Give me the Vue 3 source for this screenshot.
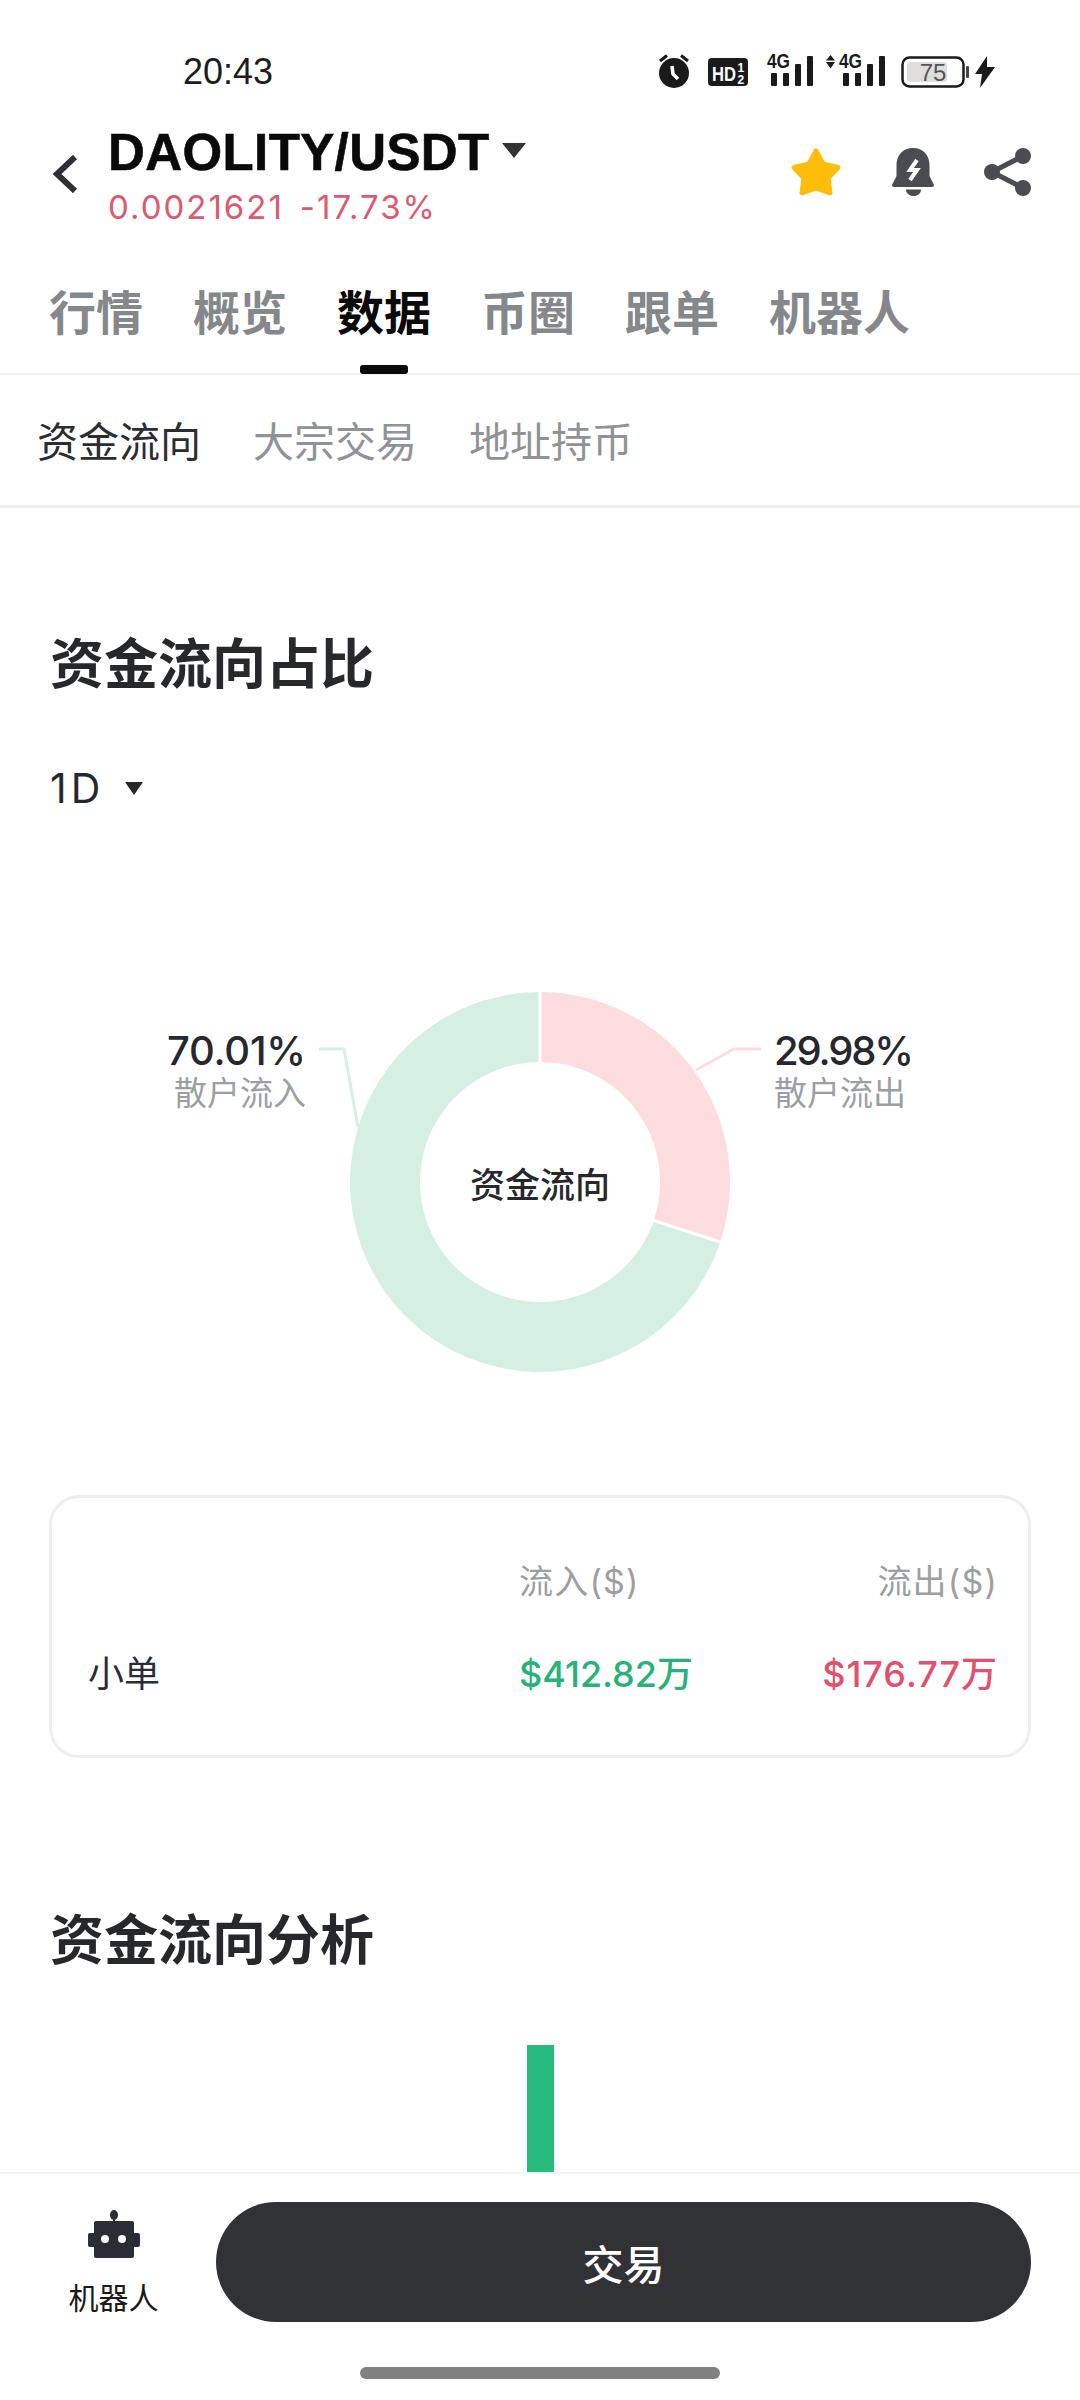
<template>
  <div class="page">
    <div class="content">
      <div class="status">
        <span class="time">20:43</span>
        <div class="status-icons">
          <svg width="32" height="34" viewBox="0 0 32 34" class="ic-alarm">
            <circle cx="16" cy="19" r="15" fill="#1a1a1a" />
            <path d="M2 7 9 1.500M30 7 23 1.500" stroke="#1a1a1a" stroke-width="3" fill="none" />
            <path d="M14 12l1 8 5 5" stroke="#fff" stroke-width="3.500" fill="none" />
          </svg>
          <svg width="40" height="28" viewBox="0 0 40 28" class="ic-hd">
            <rect width="40" height="28" rx="4" fill="#1a1a1a" />
            <text x="4" y="23" class="hd-text" textLength="24" lengthAdjust="spacingAndGlyphs">HD</text>
            <text x="29.500" y="14" class="hd-small">1</text>
            <text x="29.500" y="26" class="hd-small">2</text>
          </svg>
          <svg width="46" height="41" viewBox="0 -8 46 41" class="ic-sig">
            <text x="0" y="14" class="net" textLength="23" lengthAdjust="spacingAndGlyphs">4G</text>
            <rect x="4" y="19" width="6" height="13" rx="1" fill="#1a1a1a" />
            <rect x="16" y="19" width="6" height="13" rx="1" fill="#1a1a1a" />
            <rect x="28" y="10" width="6" height="22" rx="1" fill="#1a1a1a" />
            <rect x="40" y="2" width="6" height="30" rx="1" fill="#1a1a1a" />
          </svg>
          <svg width="59" height="41" viewBox="0 -8 59 41" class="ic-sig2">
            <path d="M4.500 1l4.500 5.500H0zM4.500 14.500 9 8H0z" fill="#1a1a1a" />
            <text x="13" y="14" class="net" textLength="23" lengthAdjust="spacingAndGlyphs">4G</text>
            <rect x="17" y="19" width="6" height="13" rx="1" fill="#1a1a1a" />
            <rect x="29" y="19" width="6" height="13" rx="1" fill="#1a1a1a" />
            <rect x="41" y="10" width="6" height="22" rx="1" fill="#1a1a1a" />
            <rect x="53" y="2" width="6" height="30" rx="1" fill="#1a1a1a" />
          </svg>
          <svg width="68" height="32" viewBox="0 0 68 32" class="ic-bat">
            <rect x="1.500" y="1.500" width="61" height="29" rx="7" fill="#fff" stroke="#1a1a1a" stroke-width="2.500" />
            <rect x="6" y="6" width="40" height="20" rx="3" fill="#dedede" />
            <rect x="65" y="10" width="3" height="12" rx="1" fill="#444" />
            <text x="32" y="25" text-anchor="middle" class="bat">75</text>
          </svg>
          <svg width="20" height="32" viewBox="0 0 20 32" class="ic-bolt">
            <path d="M12 0 0 18h7l-2 14L20 11h-8z" fill="#1a1a1a" />
          </svg>
        </div>
      </div>

      <div class="header">
        <svg class="back" width="26" height="38" viewBox="0 0 26 38">
          <path d="M23 2 5 19l18 17" fill="none" stroke="#2e3035" stroke-width="6" />
        </svg>
        <div class="pair">
          <div class="pair-row">
            <span class="pair-name">DAOLITY/USDT</span>
            <span class="pair-arrow"></span>
          </div>
          <div class="pair-price">
            <span>0.0021621</span>
            <span>-17.73%</span>
          </div>
        </div>
        <div class="actions">
          <svg width="52" height="48" viewBox="0 0 52 48">
            <path d="M26 3 33 16 48 19.500 38 30 40 45 26 40 12 45 14 30 4 19.500 19 16Z" fill="#fdbd09" stroke="#fdbd09" stroke-width="5" stroke-linejoin="round" />
          </svg>
          <svg width="42" height="48" viewBox="0 0 42 48">
            <path d="M21 0C11 0 4.500 7 4.500 17V28L0 37Q0 39 2 39H40Q42 39 42 37L37.500 28V17C37.500 7 31 0 21 0Z" fill="#4a4c52" />
            <path d="M14 41.500H29C29 45.500 25.500 48 21.500 48S14 45.500 14 41.500Z" fill="#4a4c52" />
            <path d="M25 12 18 22H25L18 32" fill="none" stroke="#fff" stroke-width="4" />
          </svg>
          <svg width="47" height="48" viewBox="0 0 47 48">
            <path d="M39 8 8 24l31 16" fill="none" stroke="#4a4c52" stroke-width="5" />
            <circle cx="39" cy="8" r="8" fill="#4a4c52" />
            <circle cx="8" cy="24" r="8" fill="#4a4c52" />
            <circle cx="39" cy="40" r="8" fill="#4a4c52" />
          </svg>
        </div>
      </div>

      <div class="tabs">
        <div v-for="t in tabs" :key="t" class="tab" :class="{ 'tab--on': t === '数据' }">{{ t }}</div>
      </div>

      <div class="subtabs">
        <span v-for="(s, i) in subTabs" :key="s" class="subtab" :class="{ 'subtab--on': i === 0 }">{{ s }}</span>
      </div>

      <h2 class="title">资金流向占比</h2>
      <div class="range">
        <span class="range-text">1D</span>
        <span class="range-arrow"></span>
      </div>

      <svg class="chart" width="1080" height="677" viewBox="0 0 1080 677">
        <path d="M541.500 174 A190 190 0 0 1 720.800 422.400 L654.200 400.900 A120 120 0 0 0 541.500 244 Z" fill="#fcdcdf" />
        <path d="M538.500 174 A190 190 0 1 0 719.800 425.400 L653.200 403.900 A120 120 0 1 1 538.500 244 Z" fill="#d5f0e3" />
        <path d="M761 231H734L696 252" fill="none" stroke="#fcdcdf" stroke-width="3" />
        <path d="M319 231H344L358 309" fill="none" stroke="#d5f0e3" stroke-width="3" />
        <text x="167" y="247" class="pct" textLength="139">70.01%</text>
        <text x="306" y="287" text-anchor="end" class="lab">散户流入</text>
        <text x="774" y="247" class="pct" textLength="140">29.98%</text>
        <text x="774" y="287" class="lab">散户流出</text>
        <text x="540" y="380" text-anchor="middle" class="mid">资金流向</text>
      </svg>

      <div class="card">
        <div class="card-row card-head">
          <span></span>
          <span>流入($)</span>
          <span class="right">流出($)</span>
        </div>
        <div class="card-row card-body">
          <span class="name">小单</span>
          <span class="up">$412.82万</span>
          <span class="down right">$176.77万</span>
        </div>
      </div>

      <h2 class="title title--second">资金流向分析</h2>
      <div class="bars"><div class="bar"></div></div>
    </div>

    <div class="footer">
      <div class="footer-row">
        <div class="robot">
          <svg width="52" height="48" viewBox="0 0 52 48">
            <rect x="25" y="6" width="2" height="8" fill="#2a2c36" />
            <ellipse cx="26" cy="5" rx="4" ry="5" fill="#2a2c36" />
            <rect x="6" y="11" width="40" height="37" rx="2" fill="#2a2c36" />
            <rect x="0" y="23" width="52" height="14" rx="2" fill="#2a2c36" />
            <ellipse cx="17" cy="29" rx="4" ry="4" fill="#fff" />
            <ellipse cx="34" cy="29" rx="4" ry="4" fill="#fff" />
          </svg>
          <span>机器人</span>
        </div>
        <button class="trade">交易</button>
      </div>
      <div class="home"></div>
    </div>
  </div>
</template>

<script setup>
const tabs = ["行情", "概览", "数据", "币圈", "跟单", "机器人"];
const subTabs = ["资金流向", "大宗交易", "地址持币"];
</script>

<style>
body {
  background: #fff;
}
</style>

<style scoped>
.page {
  width: 1080px;
  height: 2400px;
  display: flex;
  flex-direction: column;
  overflow: hidden;
  background: #fff;
  font-family: "Inter", "Noto Sans CJK SC", sans-serif;
  color: #26282c;
}

.content {
  height: 2172px;
  overflow: hidden;
}

.status {
  height: 120px;
  display: flex;
  align-items: flex-start;
  justify-content: space-between;
  padding: 0 85px 0 183px;
}

.time {
  margin-top: 51px;
  font-size: 36px;
  line-height: 42px;
  font-family: "Liberation Sans", sans-serif;
  color: #1d1d1d;
}

.status-icons {
  display: flex;
  align-items: flex-start;
  padding-top: 54px;
}

.ic-hd {
  margin: 4px 0 0 18px;
}

.ic-sig {
  margin: -8px 0 0 19px;
}

.ic-sig2 {
  margin: -8px 0 0 13px;
}

.ic-bat {
  margin: 2px 0 0 16px;
}

.ic-bolt {
  margin: 2px 0 0 6px;
}

.net {
  font-size: 20px;
  font-weight: 700;
  font-family: "Liberation Sans", sans-serif;
  fill: #1a1a1a;
}

.hd-text {
  font-size: 20px;
  font-weight: 700;
  font-family: "Liberation Sans", sans-serif;
  fill: #fff;
}

.hd-small {
  font-size: 12px;
  font-weight: 700;
  font-family: "Liberation Sans", sans-serif;
  fill: #fff;
}

.bat {
  font-size: 24px;
  font-family: "Liberation Sans", sans-serif;
  fill: #555;
}

.header {
  height: 108px;
  box-sizing: border-box;
  display: flex;
  align-items: flex-start;
  padding: 4px 49px 0 52px;
}

.back {
  margin-top: 31px;
}

.pair {
  margin-left: 30px;
}

.pair-row {
  display: flex;
  align-items: center;
  height: 56px;
}

.pair-name {
  font-family: "Liberation Sans", sans-serif;
  font-size: 51px;
  font-weight: 700;
  color: #0a0a0a;
  letter-spacing: 0.4px;
  -webkit-text-stroke: 0.6px #0a0a0a;
}

.pair-arrow {
  width: 0;
  height: 0;
  margin: 0 0 4px 12px;
  border-left: 12px solid transparent;
  border-right: 12px solid transparent;
  border-top: 15px solid #333;
}

.pair-price {
  display: flex;
  gap: 16px;
  margin-top: 8px;
  font-size: 33px;
  line-height: 38px;
  letter-spacing: 2px;
  color: #dc5a6e;
}

.actions {
  margin-left: auto;
  display: flex;
  gap: 50px;
  padding-top: 24px;
}

.tabs {
  height: 147px;
  display: flex;
  gap: 50px;
  padding: 50px 0 0 49px;
  border-bottom: 2px solid #f2f2f2;
  box-sizing: border-box;
}

.tab {
  position: relative;
  height: 70px;
  font-size: 47px;
  line-height: 70px;
  font-weight: 700;
  color: #85888b;
}

.tab--on {
  color: #0a0a0a;
}

.tab--on::after {
  content: "";
  position: absolute;
  left: 23px;
  top: 87px;
  width: 48px;
  height: 9px;
  border-radius: 3px;
  background: #0a0a0a;
}

.subtabs {
  height: 133px;
  display: flex;
  align-items: center;
  gap: 52px;
  padding: 0 37px 3px;
  border-bottom: 3px solid #f0f0f0;
  box-sizing: border-box;
}

.subtab {
  font-size: 41px;
  color: #8f9396;
}

.subtab--on {
  color: #2b2d31;
}

.title {
  height: 80px;
  margin: 117px 0 0 50px;
  font-size: 54px;
  line-height: 80px;
  font-weight: 700;
  color: #26282c;
}

.title--second {
  margin-top: 143px;
}

.range {
  height: 60px;
  margin: 53px 0 0 50px;
  display: flex;
  align-items: center;
  font-size: 41px;
  color: #26282c;
}

.range-text {
  width: 75px;
  letter-spacing: 4px;
}

.range-arrow {
  width: 0;
  height: 0;
  border-left: 9px solid transparent;
  border-right: 9px solid transparent;
  border-top: 13px solid #26282c;
}

.chart {
  display: block;
}

.pct {
  font-size: 40px;
  font-weight: 500;
  fill: #26282c;
}

.lab {
  font-size: 33px;
  fill: #9b9fa2;
}

.mid {
  font-size: 35px;
  font-weight: 500;
  fill: #26282c;
}

.card {
  height: 263px;
  margin: 0 49px;
  padding: 57px 30px 0 36px;
  box-sizing: border-box;
  border: 3px solid #eeeeee;
  border-radius: 30px;
}

.card-row {
  display: grid;
  grid-template-columns: 431px 1fr 1fr;
  align-items: center;
}

.right {
  text-align: right;
}

.card-head {
  height: 42px;
  font-size: 34px;
  letter-spacing: 1.2px;
  color: #9b9fa2;
}

.card-body {
  height: 46px;
  margin-top: 48px;
  font-size: 36px;
}

.name {
  color: #2a2c36;
}

.up {
  color: #26b279;
  font-weight: 500;
}

.down {
  color: #e2506c;
  font-weight: 500;
  letter-spacing: 1px;
}

.bars {
  display: flex;
  justify-content: center;
  margin-top: 64px;
}

.bar {
  width: 27px;
  height: 200px;
  background: #26bb7c;
}

.footer {
  height: 228px;
  border-top: 2px solid #f2f2f2;
  box-sizing: border-box;
  display: flex;
  flex-direction: column;
}

.footer-row {
  display: flex;
  padding: 28px 49px 0 0;
}

.robot {
  width: 216px;
  height: 120px;
  flex: none;
  display: flex;
  flex-direction: column;
  align-items: center;
  padding: 8px 0 0 11px;
  box-sizing: border-box;
  gap: 22px;
  font-size: 30px;
  line-height: 36px;
  color: #1a1a1a;
}

.trade {
  flex: 1;
  height: 120px;
  border: none;
  border-radius: 60px;
  background: #313235;
  color: #fff;
  font-family: inherit;
  font-size: 41px;
  font-weight: 500;
}

.home {
  width: 360px;
  height: 12px;
  margin: 45px auto 0;
  border-radius: 6px;
  background: #808080;
}
</style>
